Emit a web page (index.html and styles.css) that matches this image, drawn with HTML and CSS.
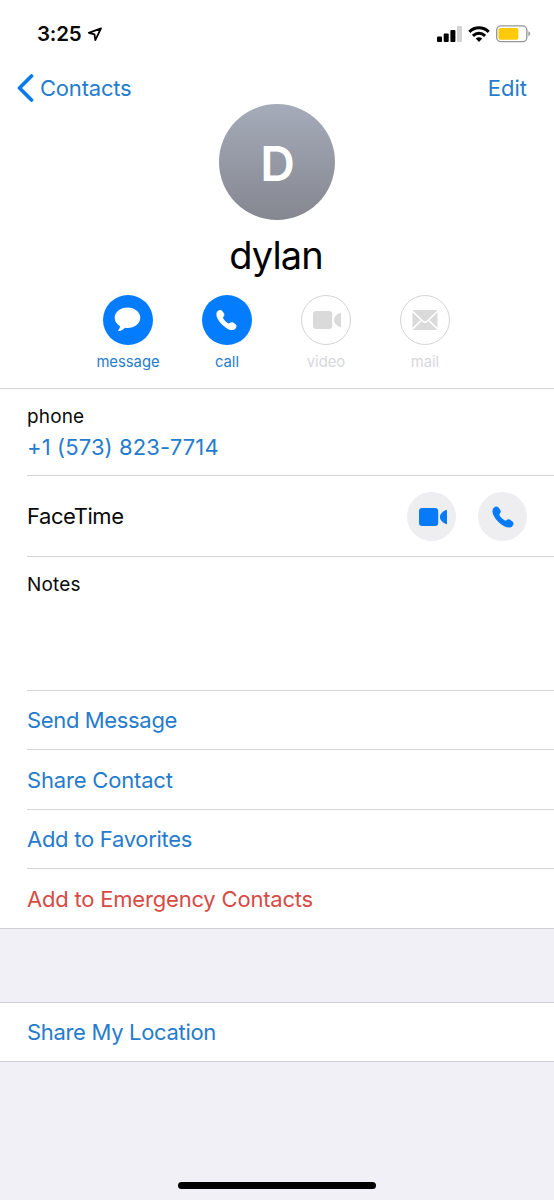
FILE: index.html
```html
<!DOCTYPE html>
<html lang="en">
<head>
<meta charset="utf-8">
<title>dylan</title>
<link rel="stylesheet" href="styles.css">
</head>
<body>
<svg class="defs" aria-hidden="true">
  <symbol id="camera" viewBox="0 0 28 18"><rect x="0" y="0" width="19.200" height="18" rx="3"/><path d="M26.800 1.900Q28 1.500 28 2.800V15.200Q28 16.500 26.800 16.100Q20.900 13.200 20.900 9T26.800 1.900Z"/></symbol>
  <symbol id="handset" viewBox="0 0 22 22"><path d="M1.800 1.700C3.300.3 5.300 0 6.500 1.500L8.300 4C9 5.200 8.900 6.400 8 7.300C7.200 8.200 7.200 8.900 7.900 9.900C9 11.500 10.500 13 12.100 14.100C13.100 14.800 13.800 14.800 14.700 14C15.600 13.100 16.800 13 18 13.700L20.500 15.400C22 16.600 21.700 18.600 20.300 20.200C18.500 22.200 15.300 21.900 12.200 20.300C7.900 18 4 14.100 1.700 9.800C.1 6.700-.1 3.500 1.800 1.700Z"/></symbol>
</svg>
<header class="profile">
  <div class="status">
    <span class="time">3:25</span>
    <svg class="arrow" width="15" height="15" viewBox="0 0 15 15"><path d="M14 1.300 1.800 5.800 7.500 7.300 8.300 13.100Z" fill="none" stroke="#000" stroke-width="1.800" stroke-linejoin="round"/></svg>
    <svg class="signal" width="25" height="16" viewBox="0 0 25 16"><rect x="0" y="10.500" width="5" height="5.500" rx="1"/><rect x="6.700" y="7.500" width="5" height="8.500" rx="1"/><rect x="13.400" y="4" width="5" height="12" rx="1"/><rect x="20" y="0" width="5" height="16" rx="1" fill="#d3d3d3"/></svg>
    <svg class="wifi" width="22" height="16" viewBox="0 0 22 16"><path d="M1.300 5.800C6.900.4 15.100.4 20.700 5.800M4.900 9.800C8.600 6.500 13.400 6.500 17.100 9.800" fill="none" stroke="#000" stroke-width="3"/><path d="M7.700 12.600Q11 10 14.300 12.600L11 15.900Z"/></svg>
    <svg class="battery" width="35" height="18" viewBox="0 0 36 18"><rect x=".7" y=".7" width="31" height="16.200" rx="4.300" fill="#fff" stroke="#969696" stroke-width="1.400"/><rect x="2.500" y="2.800" width="20.500" height="12" rx="2" fill="#fdc90b"/><path d="M33.300 6.200Q35.200 6.800 35.200 8.800T33.300 11.400Z" fill="#969696"/></svg>
  </div>
  <nav class="nav">
    <a class="back"><svg width="17" height="28" viewBox="0 0 17 28"><path d="M14.500 2 2.500 14 14.500 26" fill="none" stroke="#087bea" stroke-width="3.700" stroke-linecap="round" stroke-linejoin="round"/></svg><span>Contacts</span></a>
    <a class="edit">Edit</a>
  </nav>
  <div class="avatar"><span>D</span></div>
  <h1 class="name">dylan</h1>
  <div class="actions">
    <div class="action"><span class="disc"><svg width="27" height="25" viewBox="0 0 27 25"><path d="M13.500.5C20.600.5 26.300 4.900 26.300 10.700S20.600 20.900 13.500 20.900Q12.200 20.900 11 20.700C9.200 22.500 7.300 23.800 4.800 23.900C4.100 23.900 3.900 23.400 4.400 22.900C5.500 21.700 6.100 20.400 5.900 19C2.600 17.200.7 14.300.7 10.700C.7 4.900 6.400.5 13.500.5Z"/></svg></span><span class="caption">message</span></div>
    <div class="action"><span class="disc"><svg width="21" height="22" viewBox="0 0 22 22"><use href="#handset"/></svg></span><span class="caption">call</span></div>
    <div class="action off"><span class="disc"><svg class="cam" width="28" height="18"><use href="#camera"/></svg></span><span class="caption">video</span></div>
    <div class="action off"><span class="disc"><svg width="26" height="20" viewBox="0 0 26 20"><rect x=".5" width="25" height="20" rx="1"/><path d="M0 .7 10.800 11.200Q13 13.200 15.200 11.200L26 .7M.5 19 9.500 10.200M25.500 19 16.500 10.200" fill="none" stroke="#fff" stroke-width="1.600"/></svg></span><span class="caption">mail</span></div>
  </div>
</header>
<main>
  <section class="list">
    <div class="row phone"><span class="label">phone</span><a class="number">+1 (573) 823-7714</a></div>
    <div class="row facetime"><span class="ft">FaceTime</span><span class="round"><svg class="cam" width="28" height="18"><use href="#camera"/></svg></span><span class="round"><svg width="22" height="22"><use href="#handset"/></svg></span></div>
    <div class="row notes"><span class="label">Notes</span></div>
    <a class="row link"><span class="send">Send Message</span></a>
    <a class="row link tall"><span class="share">Share Contact</span></a>
    <a class="row link"><span class="fav">Add to Favorites</span></a>
    <a class="row link tall danger"><span class="sos">Add to Emergency Contacts</span></a>
  </section>
  <section class="list location">
    <a class="row link"><span class="loc">Share My Location</span></a>
  </section>
</main>
<footer class="home"><div class="bar"></div></footer>
</body>
</html>
```
FILE: styles.css
```css
* { box-sizing: border-box; }
body {
  margin: 0;
  height: 1200px;
  display: flex;
  flex-direction: column;
  background: #f1f0f7;
  color: #0a0a0a;
  font: 22px/28px Inter, "Liberation Sans", sans-serif;
}
.defs { position: absolute; width: 0; height: 0; }
svg { display: block; flex: none; }
.profile {
  height: 389px;
  background: #fff;
  border-bottom: 1px solid #d5d5d7;
  display: flex;
  flex-direction: column;
  align-items: center;
}
.status {
  width: 100%;
  height: 68px;
  padding: 0 23px 0 37px;
  display: flex;
  align-items: center;
}
.time { font-size: 20.500px; font-weight: 600; letter-spacing: -0.200px; margin-right: 6px; }
.signal { margin-left: auto; margin-right: 6px; }
.wifi { margin-right: 6px; }
.nav {
  width: 100%;
  height: 36px;
  padding: 6px 27px 0 17px;
  display: flex;
  justify-content: space-between;
}
.back { display: flex; gap: 6px; color: #267ccc; letter-spacing: -0.200px; }
.edit { color: #267ccc; }
.avatar {
  width: 116px;
  height: 116px;
  border-radius: 50%;
  background: linear-gradient(#a5abb9, #858790);
  display: flex;
  align-items: center;
  justify-content: center;
  color: #fff;
  font-size: 48px;
  font-weight: 600;
}
.avatar span { padding: 4px 0 0 1px; }
.name { margin: 10px 2px 0 0; font-size: 38px; line-height: 50px; font-weight: 400; color: #000; letter-spacing: -0.900px; }
.actions { display: flex; gap: 29px; margin: 14.500px 2px 0 0; }
.action { width: 70px; display: flex; flex-direction: column; align-items: center; gap: 8px; }
.disc, .round {
  width: 49px;
  height: 49px;
  border-radius: 50%;
  display: flex;
  align-items: center;
  justify-content: center;
}
.disc { width: 50px; height: 50px; background: #047cfe; fill: #fff; }
.cam { margin-left: 3px; }
.caption { font-size: 14.800px; line-height: 18px; padding-left: 1px; color: #267ccc; }
.off .disc { background: #fff; border: 1px solid #d4d4d6; fill: #dadadb; }
.off .caption { color: #d8d8dc; }
.list { background: #fff; padding-left: 27px; border-bottom: 1px solid #d0d0d4; }
.row { display: flex; align-items: center; border-bottom: 1px solid #d4d4d6; }
.row:last-child { border-bottom: 0; }
.phone { height: 87px; flex-direction: column; align-items: flex-start; padding-top: 14px; }
.label { font-size: 19px; line-height: 28px; letter-spacing: 0.150px; }
.number { color: #267ccc; margin-top: 2px; letter-spacing: 0.120px; }
.facetime { height: 81px; padding: 1px 27px 0 0; gap: 22px; }
.ft { margin-right: auto; padding-bottom: 1px; letter-spacing: -0.450px; }
.round { background: #eeeef0; fill: #077bf7; }
.notes { height: 134px; align-items: flex-start; padding-top: 14px; }
.link { height: 59px; color: #267ccc; }
.send { letter-spacing: -0.350px; }
.share { letter-spacing: -0.180px; }
.fav { letter-spacing: -0.280px; }
.sos { letter-spacing: -0.200px; }
.loc { letter-spacing: -0.320px; }
.tall { height: 60px; }
.danger { height: 59px; color: #d64b44; }
.location { margin-top: 73px; border-top: 1px solid #d0d0d4; }
.location .link { height: 58px; }
.home { margin-top: auto; display: flex; justify-content: center; padding-bottom: 11px; }
.bar { width: 198px; height: 7px; border-radius: 4px; background: #000; }
```
